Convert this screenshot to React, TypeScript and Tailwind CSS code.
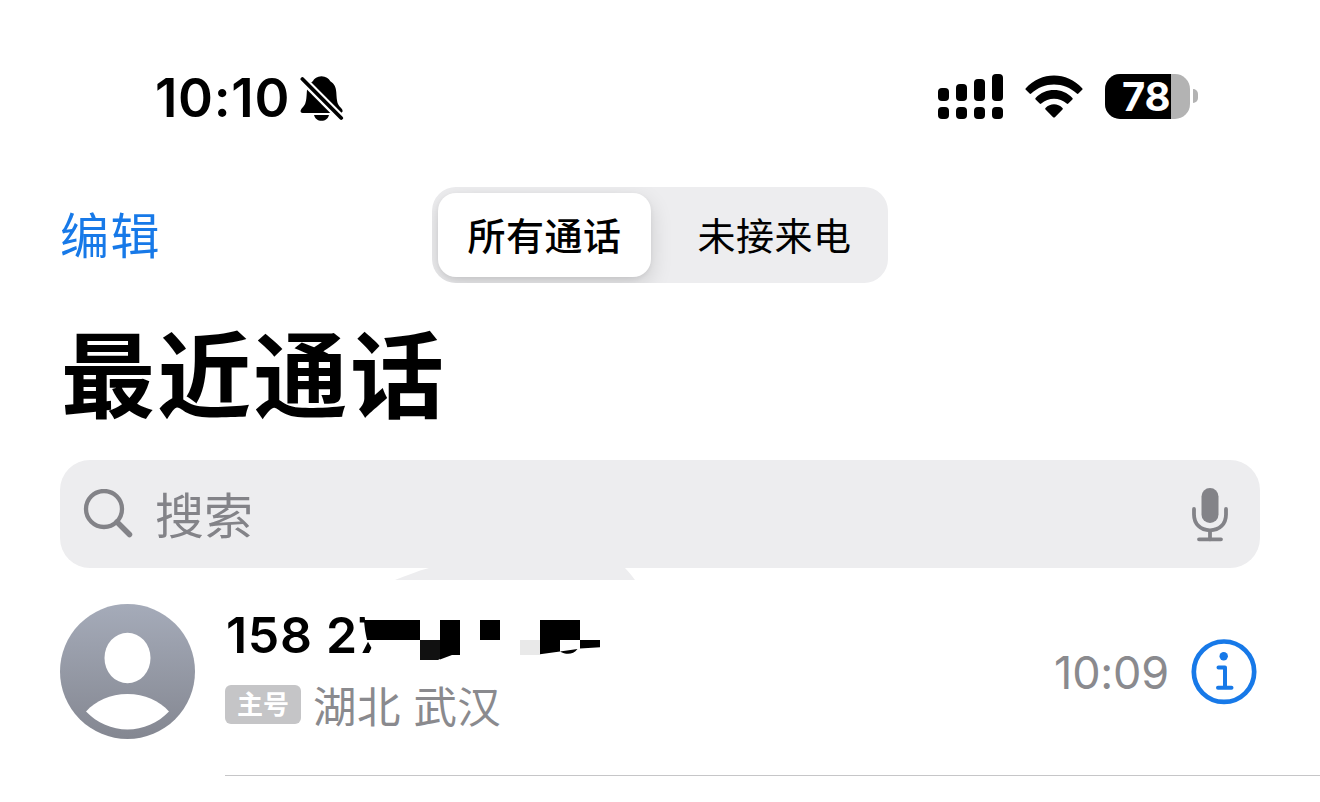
import type { ReactNode } from 'react'

const SIGNAL_BARS = ['h-[13px]', 'h-[17px]', 'h-[22px]', 'h-[27px]']

const BellOffIcon = () => (
  <svg width="44" height="46" viewBox="0 0 44 46" className="mt-[5px] shrink-0">
    <path
      d="M21.500 .3c-4.300 0-7.300 2.200-8.700 5-4 2.300-5.700 6-6 11.100-.5 9-1 11.500-4.200 15.200C1.200 33 .6 34 .6 35.200c0 1 .8 1.700 2 1.700h37.900c1.300 0 2.100-.8 2.100-1.900 0-1.200-.7-2.200-2-3.500-3.300-3.500-3.800-6-4.300-15.100-.3-5.100-2-8.800-6-11.100C28.800 2.500 25.800.3 21.500.3z"
      fill="#000"
    />
    <path d="M14 39h15c-1 3.700-3.800 5.800-7.500 5.800S15 42.700 14 39z" fill="#000" />
    <path d="M0 .8L44 45" stroke="#fff" strokeWidth="8.200" />
    <path d="M2.400 3L41.200 42" stroke="#000" strokeWidth="3.800" strokeLinecap="round" />
  </svg>
)

const SignalIcon = () => (
  <div className="flex h-[45px] items-end gap-[7px]">
    {SIGNAL_BARS.map((height) => (
      <div key={height} className="flex flex-col gap-[6px]">
        <span className={`w-[11px] rounded-[4px] bg-black ${height}`} />
        <span className="h-[12px] w-[11px] rounded-[4px] bg-black" />
      </div>
    ))}
  </div>
)

const WifiIcon = () => (
  <svg width="58" height="43" viewBox="0 0 58 43">
    <path d="M.8 13.200C16-3.800 42-3.800 57.200 13.200c.5.500.5 1.100 0 1.600l-3.800 3.800c-.5.500-1.100.5-1.600 0C39.300 6.400 18.700 6.400 6.200 18.600c-.5.500-1.100.5-1.600 0L.8 14.800c-.5-.5-.5-1.100 0-1.600z" />
    <path d="M10.600 23c10-10.600 26.800-10.600 36.800 0 .5.500.5 1.100 0 1.600l-4.100 4c-.5.500-1.100.5-1.600 0-7-6.500-18.400-6.500-25.400 0-.5.500-1.100.5-1.600 0l-4.100-4c-.5-.5-.5-1.100 0-1.600z" />
    <path d="M20.500 33c4.700-4.900 12.300-4.900 17 0 .5.500.5 1.100 0 1.600l-7.600 7.600c-.5.500-1.300.5-1.800 0l-7.600-7.600c-.5-.5-.5-1.100 0-1.600z" />
  </svg>
)

const Battery = ({ level }: { level: number }) => (
  <div className="flex items-center gap-[3px]">
    <div className="relative h-[45px] w-[85px]">
      <div className="h-full overflow-hidden rounded-[15px] bg-[#b3b3b3]">
        <div className="h-full bg-black" style={{ width: `${level}%` }} />
      </div>
      <span className="absolute -top-[2px] left-[17px] text-[40px] leading-[50px] font-bold tracking-[-0.2px] text-white">
        {level}
      </span>
    </div>
    <span className="h-[14px] w-[5px] rounded-r-full bg-[#b3b3b3]" />
  </div>
)

const StatusBar = () => (
  <div className="flex h-[50px] items-center justify-between pr-[122px] pl-[155px]">
    <div className="flex items-center gap-[10px]">
      <span className="pt-[3px] text-[53px] leading-[50px] font-semibold tracking-[0.7px]">10:10</span>
      <BellOffIcon />
    </div>
    <div className="flex items-center gap-[22px]">
      <SignalIcon />
      <WifiIcon />
      <Battery level={78} />
    </div>
  </div>
)

const Tab = ({ active, children }: { active?: boolean; children: ReactNode }) => (
  <button
    className={
      active
        ? 'h-[84px] w-[213px] rounded-[18px] bg-white pt-[2px] text-[38px] font-medium tracking-[0.5px] shadow-[0_8px_22px_rgba(0,0,0,0.14),0_2px_5px_rgba(0,0,0,0.06)]'
        : 'h-[84px] flex-1 pt-[2px] pl-[16px] text-[38px] tracking-[0.5px]'
    }
  >
    {children}
  </button>
)

const SearchIcon = () => (
  <svg width="50" height="50" viewBox="0 0 50 50" fill="none" stroke="#838388">
    <circle cx="21" cy="20" r="18" strokeWidth="4.300" />
    <path d="M34 33L46.500 45.500" strokeWidth="5.500" strokeLinecap="round" />
  </svg>
)

const MicIcon = () => (
  <svg width="38" height="54" viewBox="0 0 38 54" fill="none" stroke="#838388" strokeLinecap="round" className="mt-[2px]">
    <rect x="10.500" y="0" width="17" height="35" rx="8.500" fill="#838388" stroke="none" />
    <path d="M3 21v5.500c0 9.500 6.500 15.800 16 15.800s16-6.300 16-15.800V21M19 42.500v9M8 51.300h22" strokeWidth="3.800" />
  </svg>
)

const Avatar = () => (
  <svg width="135" height="135" viewBox="0 0 135 135" className="shrink-0">
    <defs>
      <linearGradient id="avatar" x1="0" y1="0" x2="0" y2="1">
        <stop offset="0" stopColor="#a5abb9" />
        <stop offset="1" stopColor="#848791" />
      </linearGradient>
    </defs>
    <circle cx="67.500" cy="67.500" r="67.500" fill="url(#avatar)" />
    <ellipse cx="67.500" cy="54" rx="23" ry="25.300" fill="#fff" />
    <path d="M26 107.500C36 96.500 50 90 67.500 90S99 96.500 109 107.500C98 119 83 125.500 67.500 125.500S37 119 26 107.500z" fill="#fff" />
  </svg>
)

const InfoIcon = () => (
  <svg width="66" height="66" viewBox="0 0 66 66" fill="none" stroke="#1779e8">
    <circle cx="33" cy="32.700" r="30.200" strokeWidth="4.700" />
    <circle cx="32.700" cy="17.300" r="4.200" fill="#1779e8" stroke="none" />
    <path d="M27.500 28.500h6.500v20M27 48.800h13.500" strokeWidth="4" strokeLinecap="round" strokeLinejoin="round" />
  </svg>
)

// Blocky scribble that hides the rest of the number
const Redaction = () => (
  <svg width="250" height="50" viewBox="360 615 250 50" className="absolute top-[11px] left-[135px]">
    <path d="M364.500 615H392V662H366L371.500 648 367 640z" fill="#fff" />
    <path d="M364 620H420V640H367C365.500 634 364.500 627 364 620z" />
    <path d="M420 640H440V659L438 660H420z" fill="#111" />
    <path d="M440 620H460V655H452L440 659.500z" />
    <path d="M480 620h20v20h-20zM540 620h40v20h-20v11.500L540 654.300z" />
    <path d="M520 640h20v15h-20z" fill="#e9e9e9" />
    <path d="M580 640h20v7.300l-20 1.200zM560 651.500L577.500 649C573 655 566 655 560 651.500z" />
  </svg>
)

const CallRow = () => (
  <div className="flex pl-[60px]">
    <div className="pt-[24px]">
      <Avatar />
    </div>
    <div className="ml-[30px] flex h-[196px] flex-1 border-b border-[#c6c6c8] pt-[24px] pr-[63px]">
      <div className="relative flex-1">
        <p className="h-[62px] pl-[1px] text-[50px] leading-[62px] font-semibold tracking-[0.7px]">158 27</p>
        <Redaction />
        <div className="mt-[8px] flex items-center gap-[12px]">
          <span className="flex h-[39px] w-[76px] items-center justify-center rounded-[6px] bg-[#c5c5c7] pt-[2px] text-[26px] leading-none font-bold text-white">
            主号
          </span>
          <span className="h-[60px] pt-[3px] text-[43.500px] leading-[60px] tracking-[0.4px] text-[#8a8a8e]">湖北 武汉</span>
        </div>
      </div>
      <div className="flex h-[135px] items-center gap-[22px]">
        <span className="pt-[2px] text-[45px] leading-[60px] tracking-[-0.2px] text-[#8a8a8e]">10:09</span>
        <InfoIcon />
      </div>
    </div>
  </div>
)

export default function App() {
  return (
    <main className="h-[802px] w-[1320px] overflow-hidden bg-white pt-[71px] font-['Inter','Noto_Sans_CJK_SC',sans-serif] text-black">
      <StatusBar />
      <header className="mt-[66px] grid h-[96px] grid-cols-[372px_456px_372px] items-center px-[60px]">
        <button className="pt-[3px] text-left text-[49px] leading-[60px] tracking-[1.500px] text-[#1779e8]">编辑</button>
        <div className="flex h-[96px] items-center overflow-hidden rounded-[24px] bg-[#ededef] px-[6px]">
          <Tab active>所有通话</Tab>
          <Tab>未接来电</Tab>
        </div>
      </header>
      <h1 className="mt-[34px] h-[120px] pl-[61px] text-[94px] leading-[120px] font-bold tracking-[2.300px]">
        最近通话
      </h1>
      <div className="mx-[60px] mt-[23px] flex h-[108px] items-center rounded-[30px] bg-[#ededef] pr-[31px] pl-[23px]">
        <SearchIcon />
        <span className="ml-[22px] flex-1 pt-[5px] text-[49px] leading-[60px] text-[#838388]">搜索</span>
        <MicIcon />
      </div>
      <svg width="240" height="12" viewBox="0 0 240 12" className="ml-[395px] block">
        <path d="M0 12C11 8 22 3 34 0H230C234 4 237 8 240 12z" fill="#ededef" />
      </svg>
      <CallRow />
    </main>
  )
}
